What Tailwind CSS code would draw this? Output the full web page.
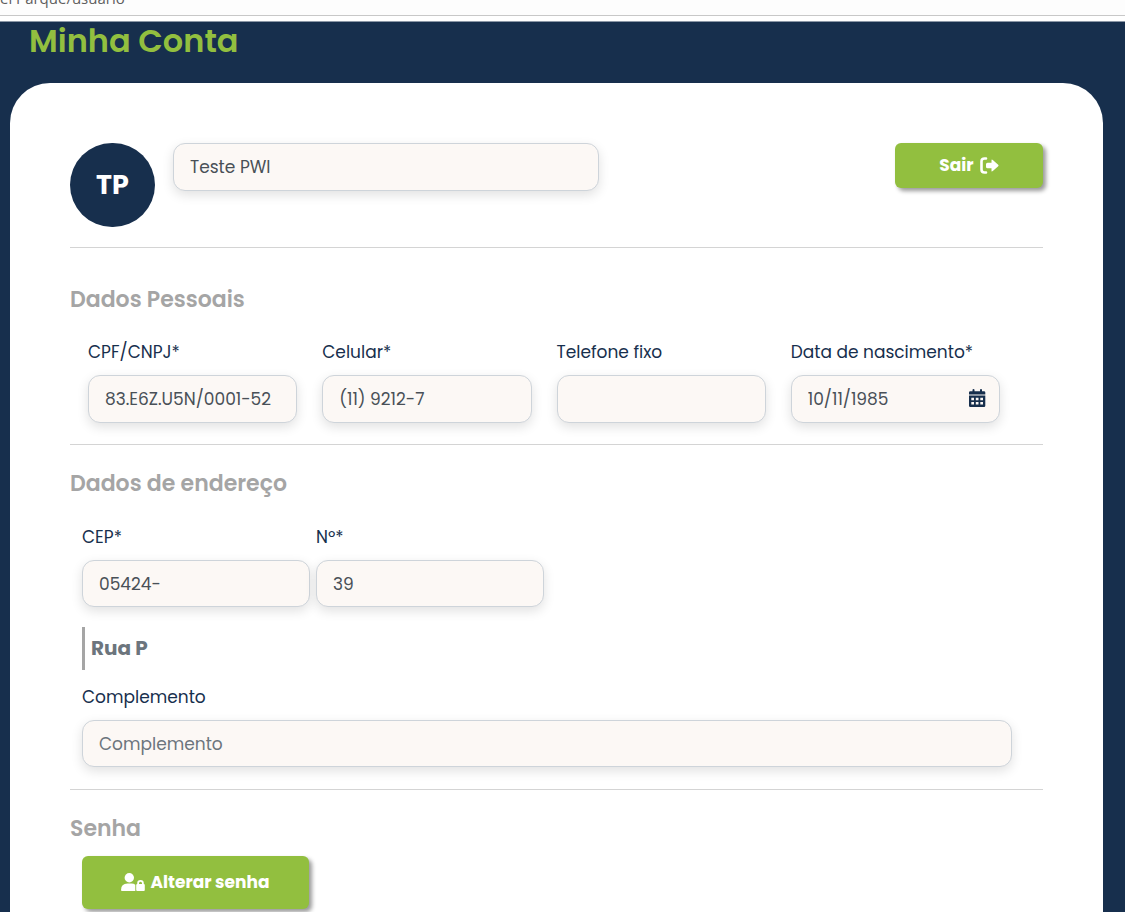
<!DOCTYPE html>
<html lang="pt-BR">
<head>
    <meta charset="UTF-8">
    <meta name="viewport" content="width=device-width, initial-scale=1.0">
    <title>Minha Conta</title>
    <script src="https://cdn.jsdelivr.net/npm/@tailwindcss/browser@4"></script>
    <style>
        body{
            font-family: 'Poppins', 'Inter', sans-serif;
        }
    </style>
</head>
<body class="bg-[#172f4d] min-h-screen flex flex-col text-[17px] text-[#172f4d]">
    <!-- barra de endereço -->
    <div class="h-[22px] shrink-0 overflow-hidden bg-white border-b border-[#8b97a6]">
        <div class="h-4 flex items-end bg-[#fdfdfd] border-b border-[#c8c8c8] text-[15px] leading-[22px] text-[#5f5f5f] font-['Open_Sans']"><span class="pb-[6px]">el Parque/usuario</span></div>
    </div>

    <h1 class="pl-[29px] h-[61px] shrink-0 text-[32px] leading-[38px] font-semibold text-[#92bf3f]">Minha Conta</h1>

    <main class="flex-1 ml-[10px] mr-[22px] px-[60px] pt-[60px] bg-white rounded-t-[40px]">
        <div class="flex items-start pb-5 border-b border-[#d4d4d4]">
            <div class="w-[85px] h-[84px] shrink-0 rounded-full bg-[#172f4d] text-white text-[27px] font-bold flex items-center justify-center">TP</div>
            <input type="text" aria-label="Nome" value="Teste PWI" class="ml-[18px] w-[426px] h-12 px-4 rounded-xl border border-[#ced4da] bg-[#fcf8f5] text-[#495057] shadow-[0_4px_12px_rgba(0,0,0,0.12)]">
            <button type="button" class="ml-auto w-[148px] h-[45px] flex items-center justify-center gap-[6px] rounded-md bg-[#92bf3f] text-white font-bold shadow-[3px_3px_4px_rgba(0,0,0,0.4)]">
                Sair
                <svg class="w-[19px] h-[18px]" viewBox="0 0 19 18" fill="none" aria-hidden="true">
                    <path d="M6 1.500H4.500Q1.500 1.500 1.500 4.500V12.500Q1.500 15.500 4.500 15.500H6" stroke="currentColor" stroke-width="2.600" stroke-linecap="round"/>
                    <path d="M11.500 3.300Q11.500 1.800 12.800 2.900L18.200 7.700Q19 8.500 18.200 9.300L12.800 14.100Q11.500 15.200 11.500 13.700V11.200H7.500Q6 11.200 6 9.700V7.300Q6 5.800 7.500 5.800H11.500Z" fill="currentColor"/>
                </svg>
            </button>
        </div>

        <section class="pt-[35px] pb-[21px] border-b border-[#d4d4d4]">
            <h2 class="text-[22px] leading-[34px] font-semibold text-[#a5a5a5]">Dados Pessoais</h2>
            <div class="grid grid-cols-4 gap-[25px] mt-[22px] pl-[18px] pr-[43px]">
                <div>
                    <label for="cpf" class="block leading-[26px]">CPF/CNPJ*</label>
                    <input id="cpf" type="text" value="83.E6Z.U5N/0001-52" class="mt-[10px] w-full h-12 px-4 rounded-xl border border-[#ced4da] bg-[#fcf8f5] text-[#495057] shadow-[0_4px_12px_rgba(0,0,0,0.12)]">
                </div>
                <div>
                    <label for="celular" class="block leading-[26px]">Celular*</label>
                    <input id="celular" type="text" value="(11) 9212-7" class="mt-[10px] w-full h-12 px-4 rounded-xl border border-[#ced4da] bg-[#fcf8f5] text-[#495057] shadow-[0_4px_12px_rgba(0,0,0,0.12)]">
                </div>
                <div>
                    <label for="telefone" class="block leading-[26px]">Telefone fixo</label>
                    <input id="telefone" type="text" class="mt-[10px] w-full h-12 px-4 rounded-xl border border-[#ced4da] bg-[#fcf8f5] text-[#495057] shadow-[0_4px_12px_rgba(0,0,0,0.12)]">
                </div>
                <div>
                    <label for="nascimento" class="block leading-[26px] whitespace-nowrap">Data de nascimento*</label>
                    <div class="relative mt-[10px]">
                        <input id="nascimento" type="text" value="10/11/1985" class="block w-full h-12 pl-4 pr-10 rounded-xl border border-[#ced4da] bg-[#fcf8f5] text-[#495057] shadow-[0_4px_12px_rgba(0,0,0,0.12)]">
                        <button type="button" aria-label="Abrir calendário" class="absolute inset-y-0 right-[14px] flex items-center">
                            <svg class="w-[17px] h-5" viewBox="0 0 17 20" fill="currentColor" fill-rule="evenodd" aria-hidden="true">
                                <path d="M3.500 1Q3.500 0 4.500 0T5.500 1V2.300H11V1Q11 0 12 0T13 1V2.300H15Q16.300 2.300 16.300 3.600V5.500H0V3.600Q0 2.300 1.300 2.300H3.500Z"/>
                                <path d="M0 6.500H16.300V16.700Q16.300 18 15 18H1.300Q0 18 0 16.700ZM2.300 8.700V11.200H5V8.700ZM6.800 8.700V11.200H9.500V8.700ZM11.300 8.700V11.200H14V8.700ZM2.300 13V15.500H5V13ZM6.800 13V15.500H9.500V13ZM11.300 13V15.500H14V13Z"/>
                            </svg>
                        </button>
                    </div>
                </div>
            </div>
        </section>

        <section class="pt-[22px] pb-[22px] border-b border-[#d4d4d4]">
            <h2 class="text-[22px] leading-[34px] font-semibold text-[#a5a5a5]">Dados de endereço</h2>
            <div class="pl-3 pr-[31px]">
                <div class="grid grid-cols-4 gap-[6px] mt-[23px]">
                    <div>
                        <label for="cep" class="block leading-[26px]">CEP*</label>
                        <input id="cep" type="text" value="05424-" class="mt-[10px] w-full h-[47px] px-4 rounded-xl border border-[#ced4da] bg-[#fcf8f5] text-[#495057] shadow-[0_4px_12px_rgba(0,0,0,0.12)]">
                    </div>
                    <div>
                        <label for="numero" class="block leading-[26px]">Nº*</label>
                        <input id="numero" type="text" value="39" class="mt-[10px] w-full h-[47px] px-4 rounded-xl border border-[#ced4da] bg-[#fcf8f5] text-[#495057] shadow-[0_4px_12px_rgba(0,0,0,0.12)]">
                    </div>
                </div>
                <p class="mt-5 pl-[6px] border-l-3 border-[#a5a5a5] text-[20px] leading-[43px] font-bold text-[#6c757d]">Rua P</p>
                <label for="complemento" class="block mt-[14px] leading-[26px]">Complemento</label>
                <input id="complemento" type="text" placeholder="Complemento" class="mt-[10px] w-full h-[47px] px-4 rounded-xl border border-[#ced4da] bg-[#fcf8f5] text-[#495057] placeholder:text-[#6c757d] shadow-[0_4px_12px_rgba(0,0,0,0.12)]">
            </div>
        </section>

        <section class="pt-[22px] pl-3">
            <h2 class="-ml-3 text-[22px] leading-[34px] font-semibold text-[#a5a5a5]">Senha</h2>
            <button type="button" class="mt-[10px] w-[227px] h-[53px] flex items-center justify-center gap-[5px] rounded-md bg-[#92bf3f] text-white font-bold shadow-[3px_3px_4px_rgba(0,0,0,0.4)]">
                <svg class="w-6 h-5" viewBox="0 0 24 20" fill="currentColor" fill-rule="evenodd" aria-hidden="true">
                    <circle cx="8.300" cy="4.700" r="4.700"/>
                    <path d="M0 17Q0 10.500 6.500 10.500H10.500Q12.800 10.500 14.300 11.800V18H1Q0 18 0 17Z"/>
                    <path d="M16.200 11V10.300Q16.200 7 19.500 7T22.800 10.300V11Q23.800 11 23.800 12V17Q23.800 18 22.800 18H16.200Q15.200 18 15.200 17V12Q15.200 11 16.200 11ZM18 11H21V10.300Q21 8.800 19.500 8.800T18 10.300Z"/>
                </svg>
                Alterar senha
            </button>
        </section>
    </main>
</body>
</html>
